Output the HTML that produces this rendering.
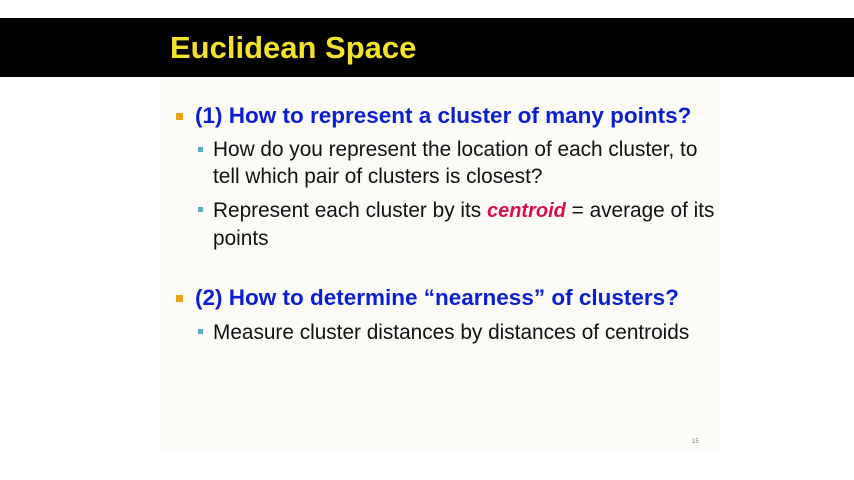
<!DOCTYPE html>
<html><head><style>
body{margin:0;width:854px;height:480px;background:#fff;position:relative;overflow:hidden;font-family:"Liberation Sans",sans-serif}
.bar{position:absolute;left:0;top:18px;width:854px;height:59px;background:#000}
.slide{position:absolute;left:160px;top:77px;width:560px;height:373px;background:#fcfbf8}
.t{position:absolute;left:170px;top:30px;color:#f2e32a;font-size:31px;font-weight:bold;white-space:nowrap}
.h{position:absolute;color:#0c1fd0;font-weight:bold;font-size:22.5px;white-space:nowrap}
.b{position:absolute;color:#111;font-size:20.8px;white-space:nowrap;line-height:27px}
.sq1{position:absolute;width:7px;height:7px;background:#e8a517}
.sq2{position:absolute;width:5px;height:5px;background:#5ab0c0}
</style></head><body>
<div class="bar"></div>
<div class="slide"></div>
<div class="t">Euclidean Space</div>
<div class="sq1" style="left:176px;top:113px"></div>
<div class="h" style="left:195px;top:103px">(1) How to represent a cluster of many points?</div>
<div class="sq2" style="left:198px;top:147px"></div>
<div class="b" style="left:213px;top:136px">How do you represent the location of each cluster, to<br>tell which pair of clusters is closest?</div>
<div class="sq2" style="left:198px;top:207px"></div>
<div class="b" style="left:213px;top:197px">Represent each cluster by its <b style="color:#d8104a;font-style:italic;font-size:20px">centroid</b> = average of its<br>points</div>
<div class="sq1" style="left:176px;top:295px"></div>
<div class="h" style="left:195px;top:285px">(2) How to determine “nearness” of clusters?</div>
<div class="sq2" style="left:198px;top:329px"></div>
<div class="b" style="left:213px;top:319px">Measure cluster distances by distances of centroids</div>
<div style="position:absolute;left:692px;top:439px;font-size:6px;color:#777">15</div>
</body></html>
